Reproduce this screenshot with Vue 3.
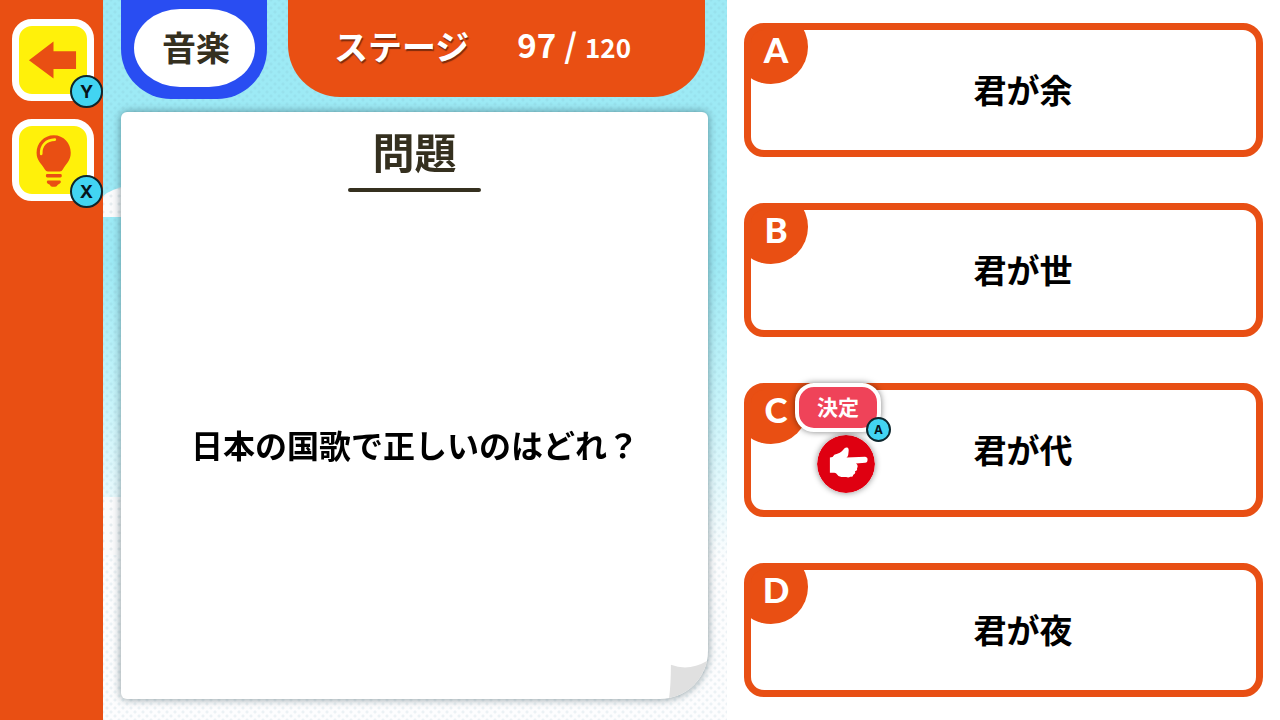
<script setup>
import { ref } from 'vue'

const answers = [
  { key: 'A', text: '君が余' },
  { key: 'B', text: '君が世' },
  { key: 'C', text: '君が代' },
  { key: 'D', text: '君が夜' },
]
const selected = ref('C')
const current = 97
const total = 120
</script>

<template>
  <div class="game">
    <nav class="sidebar">
      <button class="tool" type="button" aria-label="戻る">
        <svg viewBox="57 77 205 205" aria-hidden="true">
          <path d="M87 180 161 124V153H229V207H161V235Z" fill="#e94f13" />
        </svg>
        <span class="pad-key">Y</span>
      </button>
      <button class="tool" type="button" aria-label="ヒント">
        <svg viewBox="57 377 205 205" aria-hidden="true">
          <g fill="#e94f13">
            <path d="M162 405C192 405 213 429 213 458C213 481 200 490 189 508Q186 514 180 514H144Q138 514 135 508C124 490 110 481 110 458C110 429 132 405 162 405Z" />
            <rect x="138" y="522" width="48" height="10" rx="4" />
            <path d="M143 541H181Q186 545 180 550L174 554Q171 560 166 560H157Q152 560 150 554L143 550Q138 545 143 541Z" />
          </g>
          <path d="M124 461C123 435 139 419 165 418" fill="none" stroke="#fff10a" stroke-width="8" stroke-linecap="round" />
        </svg>
        <span class="pad-key">X</span>
      </button>
    </nav>

    <main class="board">
      <header class="top">
        <div class="category"><span>音楽</span></div>
        <div class="stage">
          <span class="stage-name">ステージ</span>
          <span class="count"><b>{{ current }}</b><i>/</i><small>{{ total }}</small></span>
        </div>
      </header>
      <section class="sheet">
        <h1>問題</h1>
        <p>日本の国歌で正しいのはどれ？</p>
        <svg class="curl" viewBox="0 0 40 40" aria-hidden="true">
          <path d="M2 4Q21 11 40 0V40H0Q2 25 2 4Z" fill="#e0e0e0" />
        </svg>
      </section>
    </main>

    <ul class="answers">
      <li v-for="a in answers" :key="a.key">
        <button class="answer" type="button" @click="selected = a.key">
          <span class="letter">{{ a.key }}</span>
          <span class="text">{{ a.text }}</span>
        </button>
        <div v-if="selected === a.key" class="cursor">
          <button class="decide" type="button">
            決定
            <span class="pad-key small">A</span>
          </button>
          <svg class="hand" viewBox="234 198 171 171" aria-hidden="true">
            <circle cx="319.5" cy="283.5" r="85.5" fill="#df0011" />
            <path d="M272 264 280 263 285 256Q304 252 312 241Q317 233 323 235Q329 237 327 248L326 257Q325 262 321 264L376 262Q384 264 383 271Q383 280 376 280L349 282Q357 288 352 296Q354 303 346 305Q349 312 341 315Q340 323 332 321Q327 325 320 322H306Q296 321 290 311L285 309H272Z" fill="#fff" />
          </svg>
        </div>
      </li>
    </ul>
  </div>
</template>

<style>
body {
  margin: 0;
}
</style>

<style scoped>
.game {
  display: grid;
  grid-template-columns: 103px minmax(0, 624fr) minmax(0, 553fr);
  min-height: 100vh;
  background: #fff;
  font-family: "Noto Sans CJK JP", "Noto Sans", sans-serif;
  font-weight: 700;
  color: #000;
}
button {
  margin: 0;
  padding: 0;
  font: inherit;
  color: inherit;
  cursor: pointer;
}
.sidebar {
  display: flex;
  flex-direction: column;
  align-items: flex-start;
  gap: 18px;
  padding: 19px 0 0 12px;
  background: #e94f13;
  position: relative;
  z-index: 1;
}
.tool {
  position: relative;
  box-sizing: border-box;
  width: 82px;
  height: 82px;
  border: 7px solid #fff;
  border-radius: 20px;
  background: #fff10a;
}
.tool svg {
  display: block;
  width: 68px;
  height: 68px;
}
.pad-key {
  position: absolute;
  right: -16px;
  bottom: -14px;
  box-sizing: border-box;
  width: 33px;
  height: 33px;
  border: 2px solid #0d262d;
  border-radius: 50%;
  background: #42d4f2;
  color: #06141c;
  font-family: Inter, sans-serif;
  font-size: 18px;
  line-height: 29px;
  text-align: center;
}
.pad-key.small {
  right: -14px;
  bottom: -14px;
  width: 25px;
  height: 25px;
  font-size: 12px;
  line-height: 21px;
}
.board {
  position: relative;
  display: flex;
  flex-direction: column;
  gap: 13px;
  padding: 0 19px 21px 18px;
  overflow: hidden;
  background:
    radial-gradient(circle, rgba(110, 160, 180, 0.12) 1px, transparent 2px) 0 0 / 8px 8px,
    radial-gradient(circle, rgba(110, 160, 180, 0.12) 1px, transparent 2px) 4px 4px / 8px 8px,
    linear-gradient(#9deaf5 0%, #9deaf5 36%, #c8f4fa 56%, #fdfdfe 78%);
}
.board::before,
.board::after {
  content: "";
  position: absolute;
  left: -4px;
  width: 60px;
  background: radial-gradient(circle, #e6ecef 1px, transparent 2px) 0 0 / 8px 8px, #fbfbfc;
}
.board::before {
  top: 184px;
  height: 33px;
  border-top-left-radius: 50px 20px;
}
.board::after {
  top: 497px;
  height: 58px;
}
.top {
  display: flex;
  gap: 21px;
  align-items: flex-start;
  padding-right: 3px;
}
.category {
  box-sizing: border-box;
  flex: none;
  width: 146px;
  height: 99px;
  padding: 9px 12px 12px 13px;
  border-radius: 0 0 50px 50px;
  background: #294df2;
}
.category span {
  display: flex;
  align-items: center;
  justify-content: center;
  box-sizing: border-box;
  height: 100%;
  padding: 0 0 3px 3px;
  border-radius: 46px / 39px;
  background: #fff;
  color: #35301f;
  font-size: 34px;
  line-height: 40px;
}
.stage {
  box-sizing: border-box;
  flex: 1;
  display: flex;
  align-items: center;
  justify-content: center;
  gap: 48px;
  height: 97px;
  padding: 0 28px 6px 0;
  border-radius: 0 0 52px 52px;
  background: #e94f13;
  color: #fff;
}
.stage-name {
  font-size: 34px;
  line-height: 40px;
  text-shadow: 1px 2px 1px #7d2b0c;
}
.count {
  display: flex;
  align-items: baseline;
  gap: 8px;
  font-size: 33px;
  line-height: 40px;
}
.count b {
  font-weight: 700;
}
.count i {
  font-style: normal;
}
.count small {
  font-size: 26px;
}
.sheet {
  position: relative;
  z-index: 1;
  flex: 1;
  display: flex;
  flex-direction: column;
  align-items: center;
  overflow: hidden;
  border-radius: 6px 6px 48px 6px;
  background: #fff;
  filter: drop-shadow(0 0 4px rgba(30, 60, 70, 0.55));
}
.sheet h1 {
  width: 133px;
  margin: 15px 0 0;
  color: #35301f;
  font-size: 42px;
  line-height: 48px;
  text-align: center;
}
.sheet h1::after {
  content: "";
  display: block;
  height: 4px;
  margin-top: 13px;
  border-radius: 2px;
  background: #35301f;
}
.sheet p {
  flex: 1;
  display: flex;
  align-items: center;
  margin: 0;
  padding: 0 0 4px 1px;
  font-size: 32px;
  line-height: 40px;
}
.curl {
  position: absolute;
  right: 0;
  bottom: 0;
  width: 40px;
  height: 38px;
}
.answers {
  display: grid;
  grid-template-rows: repeat(4, 1fr);
  margin: 0;
  padding: 0;
  list-style: none;
}
.answers li {
  position: relative;
  display: flex;
  padding: 23px 17px 23px 17px;
}
.answer {
  position: relative;
  flex: 1;
  display: flex;
  align-items: center;
  justify-content: center;
  overflow: hidden;
  padding: 0 0 3px 39px;
  border: 7px solid #e84f14;
  border-radius: 20px;
  background: linear-gradient(#e84f14, #e84f14) 0 0 / 20px 20px no-repeat border-box, #fff;
}
.answer .text {
  font-size: 33px;
  line-height: 40px;
}
.letter {
  position: absolute;
  left: -17px;
  top: -20px;
  box-sizing: border-box;
  width: 74px;
  height: 74px;
  padding: 7px 0 0 10px;
  border-radius: 50%;
  background: #e94f13;
  color: #fff;
  font-family: Lato, sans-serif;
  font-weight: 900;
  font-size: 35px;
  line-height: 64px;
  text-align: center;
}
.cursor {
  position: absolute;
  left: 68px;
  top: 23px;
  display: flex;
  flex-direction: column;
  align-items: center;
  gap: 3px;
}
.decide {
  position: relative;
  z-index: 1;
  box-sizing: border-box;
  width: 86px;
  height: 49px;
  padding-bottom: 4px;
  border: 4px solid #fff;
  border-radius: 19px;
  background: #ef4359;
  box-shadow: 0 0 6px rgba(0, 0, 0, 0.5);
  color: #fff;
  font-size: 21px;
  line-height: 24px;
}
.hand {
  width: 58px;
  height: 58px;
  margin-left: 16px;
  border-radius: 50%;
  box-shadow: 0 0 6px rgba(0, 0, 0, 0.45);
}
</style>
